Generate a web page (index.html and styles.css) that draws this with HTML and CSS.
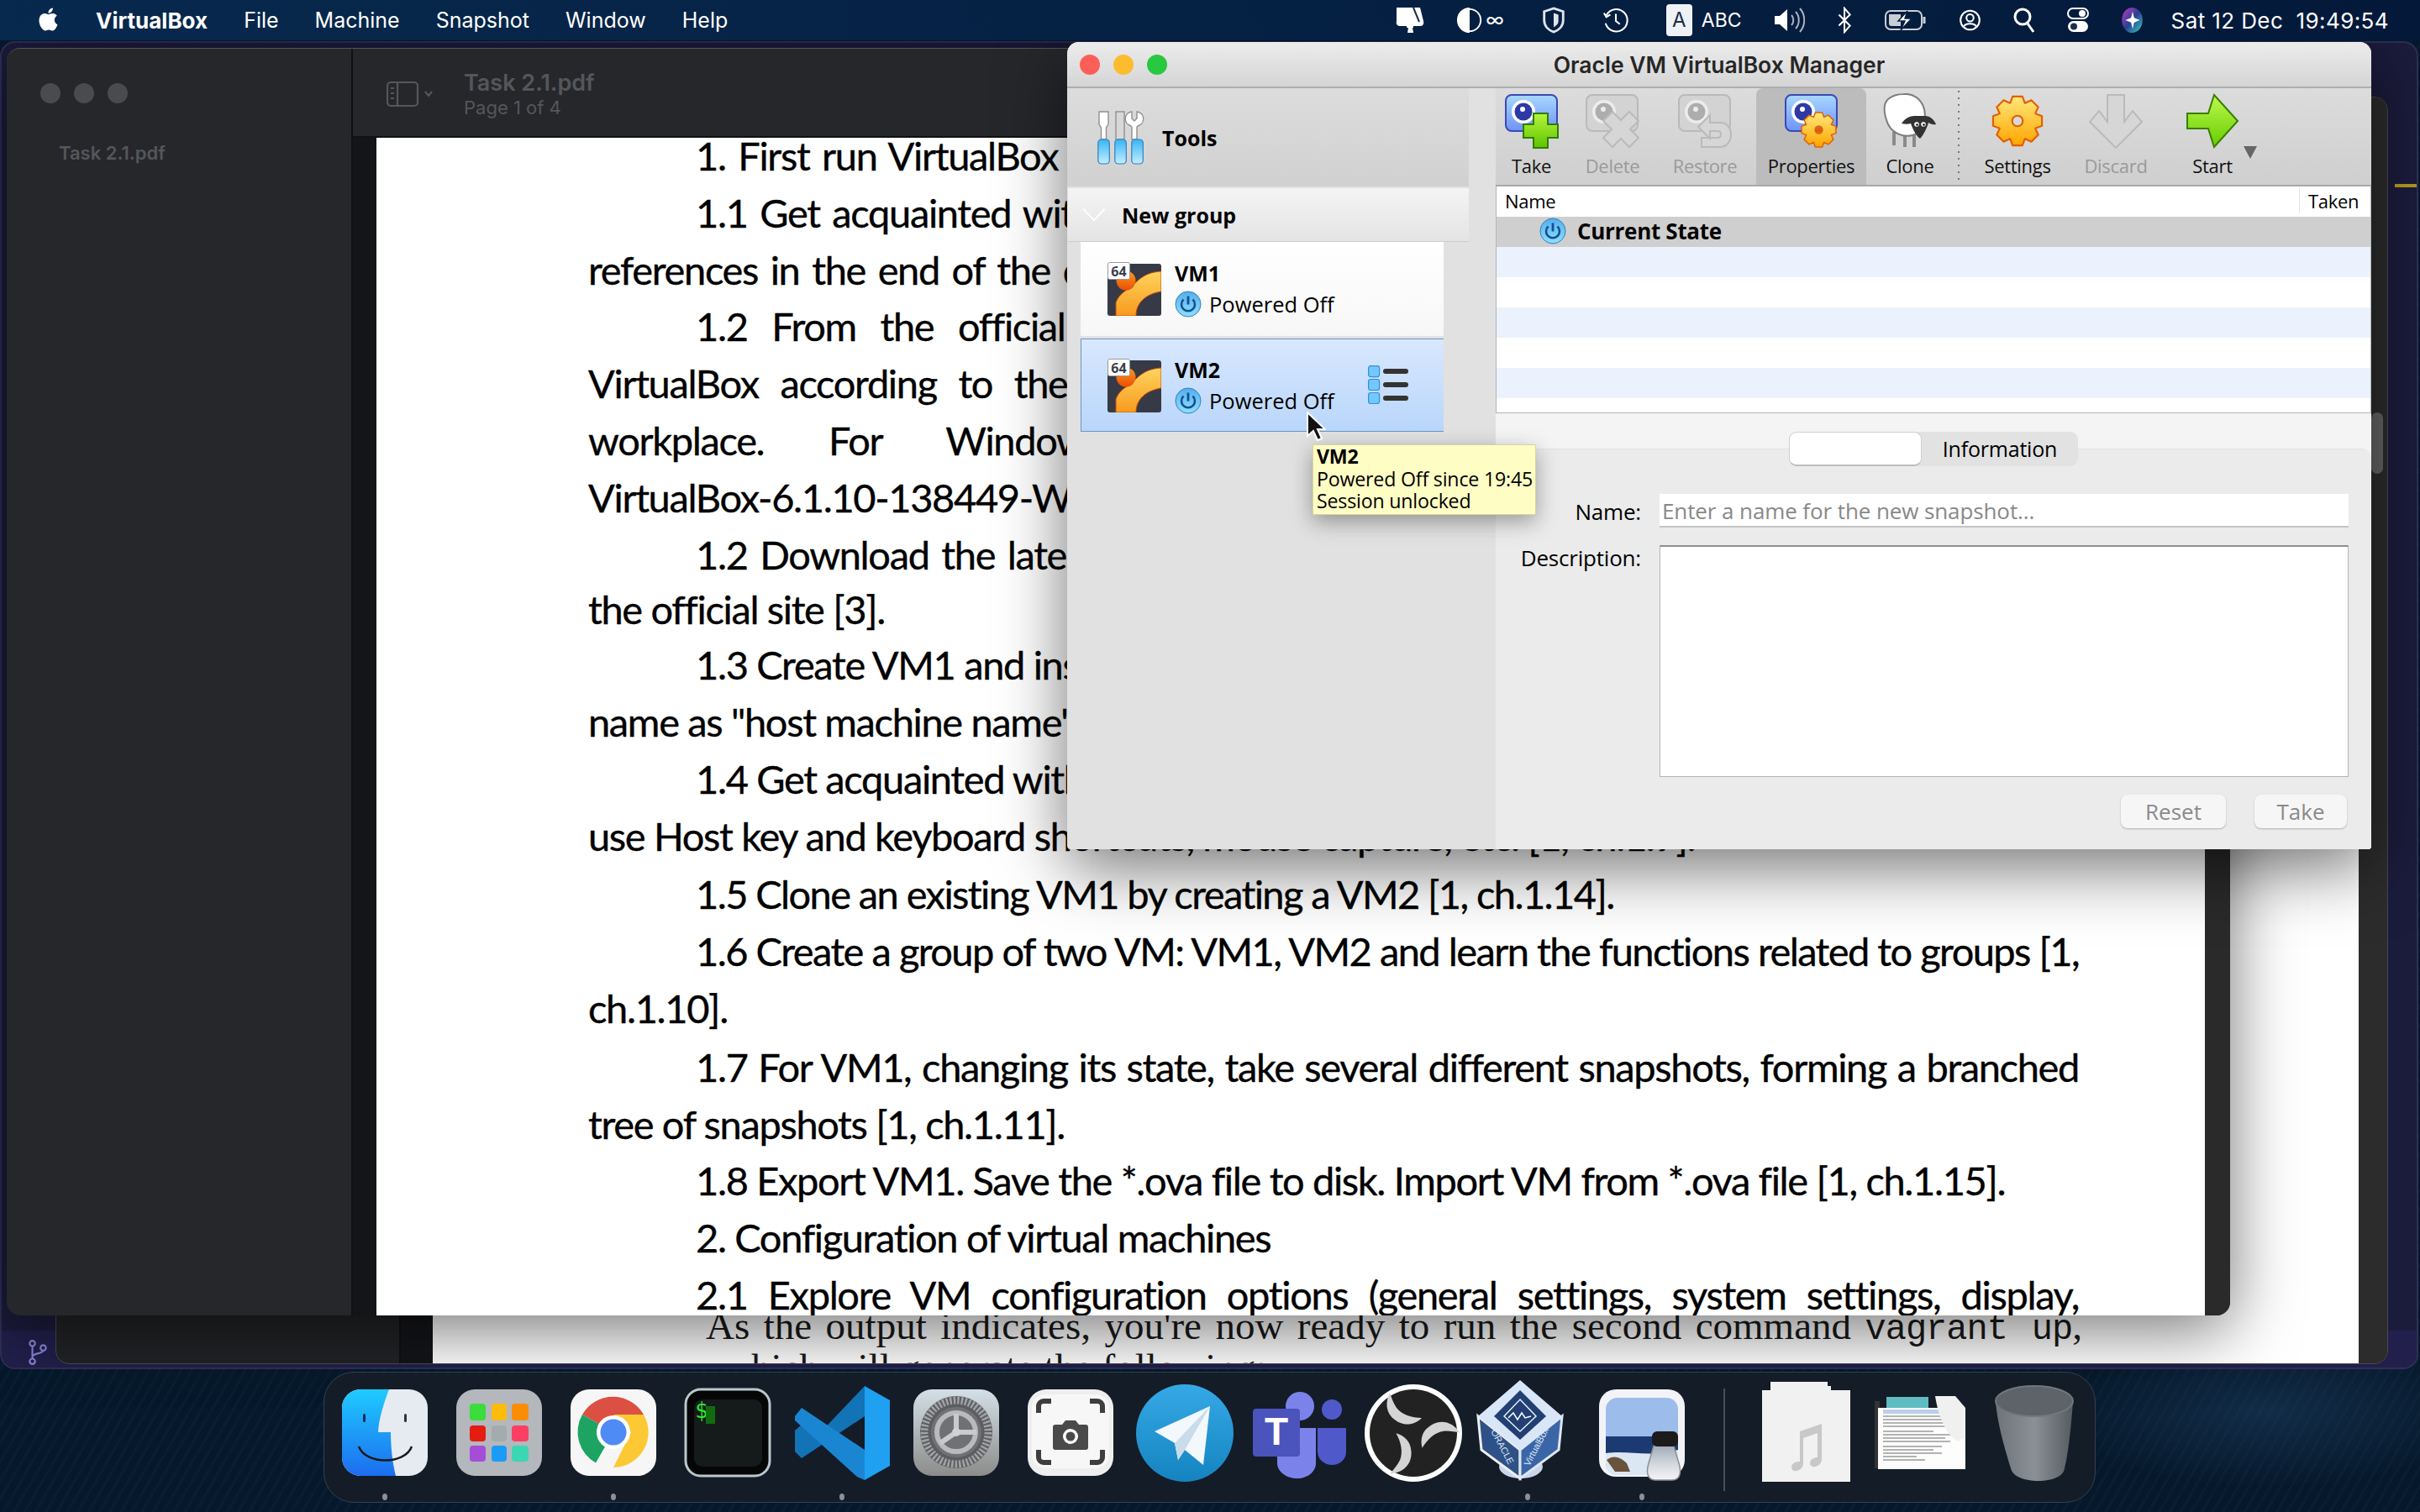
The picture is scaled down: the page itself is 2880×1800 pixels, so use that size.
FILE: index.html
```html
<!DOCTYPE html>
<html lang="en">
<head>
    <meta charset="UTF-8">
    <title>VirtualBox</title>
    <link rel="stylesheet" href="styles.css">
</head>
<body>
<!-- shared gradients and icons -->
<svg class="defs" aria-hidden="true">
    <defs>
        <linearGradient id="gScreen" x1="0" y1="0" x2="0" y2="1"><stop offset="0" stop-color="#a8d8ff"/><stop offset="1" stop-color="#6f92f5"/></linearGradient>
        <linearGradient id="gPlus" x1="0" y1="0" x2="0" y2="1"><stop offset="0" stop-color="#b4f53c"/><stop offset="1" stop-color="#5fc400"/></linearGradient>
        <linearGradient id="gGear" x1="0" y1="0" x2="0" y2="1"><stop offset="0" stop-color="#ffe97a"/><stop offset="1" stop-color="#ffa400"/></linearGradient>
        <linearGradient id="gArrow" x1="0" y1="0" x2="0" y2="1"><stop offset="0" stop-color="#bdf94f"/><stop offset="1" stop-color="#66cc00"/></linearGradient>
        <linearGradient id="gPower" x1="0" y1="0" x2="0" y2="1"><stop offset="0" stop-color="#55aeec"/><stop offset="1" stop-color="#8ee0ff"/></linearGradient>
        <linearGradient id="gHandle" x1="0" y1="0" x2="0" y2="1"><stop offset="0" stop-color="#38b5f5"/><stop offset="1" stop-color="#c4eeff"/></linearGradient>
        <linearGradient id="gCurve" x1="0" y1="0" x2="0" y2="1"><stop offset="0" stop-color="#ffd45e"/><stop offset="1" stop-color="#f79a1d"/></linearGradient>
        <linearGradient id="gBall" x1="0" y1="0" x2="0" y2="1"><stop offset="0" stop-color="#ff9a16"/><stop offset="1" stop-color="#e94e08"/></linearGradient>
        <linearGradient id="gFinder" x1="0" y1="0" x2="0" y2="1"><stop offset="0" stop-color="#1fcbff"/><stop offset="1" stop-color="#1c6df0"/></linearGradient>
        <linearGradient id="gPrefs" x1="0" y1="0" x2="0" y2="1"><stop offset="0" stop-color="#d3e0e6"/><stop offset="1" stop-color="#8c8c8a"/></linearGradient>
        <linearGradient id="gTele" x1="0" y1="0" x2="0" y2="1"><stop offset="0" stop-color="#35a9e6"/><stop offset="1" stop-color="#1484c0"/></linearGradient>
        <linearGradient id="gTrash" x1="0" y1="0" x2="1" y2="0"><stop offset="0" stop-color="#6d7378"/><stop offset=".5" stop-color="#8a9095"/><stop offset="1" stop-color="#565b60"/></linearGradient>
        <linearGradient id="gSiri" x1="0" y1="0" x2="1" y2="1"><stop offset="0" stop-color="#c23bc8"/><stop offset=".5" stop-color="#2a3f90"/><stop offset="1" stop-color="#37d3c4"/></linearGradient>
        <linearGradient id="gGlass" x1="0" y1="0" x2="0" y2="1"><stop offset="0" stop-color="#9aa5b3"/><stop offset=".6" stop-color="#d6dbe0"/><stop offset="1" stop-color="#f5f5f5"/></linearGradient>

        <symbol id="power" viewBox="0 0 32 32">
            <circle cx="16" cy="16" r="15" fill="url(#gPower)" stroke="#2f7fbe" stroke-width="1"/>
            <path d="M10.5 10.5a8 8 0 1 0 11 0" fill="none" stroke="#14508f" stroke-width="2.6"/>
            <path d="M16 6.5v10" stroke="#14508f" stroke-width="2.8"/>
        </symbol>
        <symbol id="vm64" viewBox="0 0 64 64">
            <rect x="0" y="2" width="64" height="62" rx="3" fill="#363a46"/>
            <path d="M64 11C44 12 36 22 28 30 20 35 14 38 10 48L10 64H34C34 48 46 38 64 35Z" fill="url(#gCurve)" stroke="#c9480a" stroke-width="1"/>
            <circle cx="22" cy="22" r="11.5" fill="url(#gBall)"/>
            <rect x="0.5" y="0.5" width="26" height="20" rx="2" fill="#fff" stroke="#9a9a9a"/>
            <text x="13.5" y="16.500" class="badge-text">64</text>
        </symbol>
        <symbol id="snapBlue" viewBox="0 0 64 66">
            <rect x="1" y="2" width="61" height="43" rx="7" fill="url(#gScreen)" stroke="#3949b5" stroke-width="2"/>
            <circle cx="22" cy="22" r="14" fill="#fff"/>
            <circle cx="22" cy="22" r="10.5" fill="#2d3aa5"/>
            <circle cx="21" cy="19" r="3" fill="#fff"/>
        </symbol>
        <symbol id="snapGrey" viewBox="0 0 64 66">
            <rect x="1" y="2" width="61" height="43" rx="7" fill="#d3d3d3" stroke="#bababa" stroke-width="2"/>
            <circle cx="22" cy="22" r="14" fill="#ececec"/>
            <circle cx="22" cy="22" r="10.5" fill="#adadad"/>
            <circle cx="21" cy="19" r="3" fill="#ececec"/>
        </symbol>
        <symbol id="gear" viewBox="-33 -33 66 66">
            <path fill="url(#gGear)" stroke="#e25f00" stroke-width="2.2" fill-rule="evenodd" d="M-9-22L-6-30H6L9-22 9.19-21.92 16.97-25.46 25.46-16.97 21.92-9.19 22-9 30-6V6L22 9 21.92 9.19 25.46 16.97 16.97 25.46 9.19 21.92 9 22 6 30H-6L-9 22-9.19 21.92-16.97 25.46-25.46 16.97-21.92 9.19-22 9-30 6V-6L-22-9-21.92-9.19-25.46-16.97-16.97-25.46-9.19-21.92ZM6.5 0a6.5 6.5 0 1 0-13 0 6.5 6.5 0 1 0 13 0Z"/>
        </symbol>
    </defs>
</svg>

<div class="desktop">
    <!-- window furthest back, only its edges show -->
    <div class="win code-win">
        <div class="code-status"></div>
        <div class="code-mark"></div>
        <svg class="git-icon" viewBox="0 0 22 28" fill="none" stroke="#8d86d8" stroke-width="2">
            <circle cx="5" cy="4" r="3"/><circle cx="5" cy="24" r="3"/><circle cx="17" cy="9" r="3"/>
            <path d="M5 7v14M5 19c0-5 12-3 12-7"/>
        </svg>
    </div>

    <!-- second pdf behind the front one -->
    <div class="win pdf-win pdf-back">
        <div class="pdf-side"></div>
        <div class="pdf-gutter"></div>
        <div class="back-page">
            <p class="back-line">As the output indicates, you're now ready to run the second command <code class="mono">vagrant up</code>,</p>
            <p class="back-line plain">which will generate the following:</p>
        </div>
        <div class="pdf-rail"><div class="rail-thumb"></div></div>
    </div>

    <!-- front pdf -->
    <div class="win pdf-win pdf-front">
        <div class="pdf-side front-side">
            <div class="lights">
                <span class="light"></span><span class="light"></span><span class="light"></span>
            </div>
            <div class="side-file">Task 2.1.pdf</div>
        </div>
        <div class="pdf-main">
            <div class="pdf-toolbar">
                <svg class="side-toggle" viewBox="0 0 58 32" fill="none" stroke="#55565a" stroke-width="2.2">
                    <rect x="1" y="2" width="36" height="28" rx="4"/><path d="M13 2v28M5 9h4M5 15h4M5 21h4"/><path d="M46 13l4 5 4-5"/>
                </svg>
                <div>
                    <div class="pdf-title">Task 2.1.pdf</div>
                    <div class="pdf-sub">Page 1 of 4</div>
                </div>
            </div>
            <div class="pdf-content">
                <div class="pdf-gutter front-gutter"></div>
                <div class="page">
                    <div class="doc">
                        <p class="ln in ws0">1. First run VirtualBox and get acquainted</p>
                        <p class="ln in ws0">1.1 Get acquainted with the application</p>
                        <p class="ln ws0">references in the end of the document</p>
                        <p class="ln in ws1">1.2 From the official site of Oracle</p>
                        <p class="ln ws2">VirtualBox according to the host system</p>
                        <p class="ln ws3">workplace. For Windows hosts</p>
                        <p class="ln">VirtualBox-6.1.10-138449-Win.exe</p>
                        <p class="ln in ws0">1.2 Download the latest guest system</p>
                        <p class="ln up2">the official site [3].</p>
                        <p class="ln in up2">1.3 Create VM1 and install the system</p>
                        <p class="ln">name as "host machine name"</p>
                        <p class="ln in">1.4 Get acquainted with the main menu</p>
                        <p class="ln">use Host key and keyboard shortcuts, mouse capture, etc. [1, ch.1.9].</p>
                        <p class="ln in tight down2">1.5 Clone an existing VM1 by creating a VM2 [1, ch.1.14].</p>
                        <p class="ln in just tight">1.6 Create a group of two VM: VM1, VM2 and learn the functions related to groups [1,</p>
                        <p class="ln">ch.1.10].</p>
                        <p class="ln in just down2">1.7 For VM1, changing its state, take several different snapshots, forming a branched</p>
                        <p class="ln">tree of snapshots [1, ch.1.11].</p>
                        <p class="ln in">1.8 Export VM1. Save the *.ova file to disk. Import VM from *.ova file [1, ch.1.15].</p>
                        <p class="ln in">2. Configuration of virtual machines</p>
                        <p class="ln in just">2.1 Explore VM configuration options (general settings, system settings, display,</p>
                    </div>
                </div>
                <div class="pdf-rail front-rail"></div>
            </div>
        </div>
    </div>

    <!-- VirtualBox manager -->
    <div class="win vbox">
        <div class="vbox-title">
            <div class="lights vbox-lights">
                <span class="light red"></span><span class="light yellow"></span><span class="light green"></span>
            </div>
            <div class="vbox-name">Oracle VM VirtualBox Manager</div>
        </div>
        <div class="vbox-body">
            <div class="vm-col">
                <div class="tools-row">
                    <svg class="tools-icon" viewBox="0 0 58 64">
                        <g fill="#fff" stroke="#8f8f8f" stroke-width="1.4">
                            <path d="M2 1h11v15l-2.5 4v14h-6V20L2 16Z"/>
                            <rect x="22" y="1" width="10" height="33" fill="#d8d8d8"/>
                            <path d="M41 1v8l3 3 3-3V1a8.5 8.5 0 0 1 2 16.5l-2 1.500V34h-6V19l-2-1.500A8.5 8.500 0 0 1 41 1Z"/>
                        </g>
                        <g fill="url(#gHandle)" stroke="#2f7fbe" stroke-width="1.2" >
                            <rect x="0.800" y="34" width="13.500" height="29" rx="4"/>
                            <rect x="20.800" y="34" width="13.500" height="29" rx="4"/>
                            <rect x="40.800" y="34" width="13.500" height="29" rx="4"/>
                        </g>
                    </svg>
                    <span class="tools-text">Tools</span>
                </div>
                <div class="group-row">
                    <svg class="chev" viewBox="0 0 30 20" fill="none" stroke="#fff" stroke-width="2"><path d="M1 2l14 15L29 2"/></svg>
                    <span class="group-name">New group</span>
                </div>
                <div class="vm-item">
                    <svg class="vm-icon"><use href="#vm64"/></svg>
                    <div class="vm-text">
                        <div class="vm-name">VM1</div>
                        <div class="vm-state"><svg class="power"><use href="#power"/></svg><span>Powered Off</span></div>
                    </div>
                </div>
                <div class="vm-item selected">
                    <svg class="vm-icon"><use href="#vm64"/></svg>
                    <div class="vm-text">
                        <div class="vm-name">VM2</div>
                        <div class="vm-state"><svg class="power"><use href="#power"/></svg><span>Powered Off</span></div>
                    </div>
                    <svg class="details-icon" viewBox="0 0 48 46">
                        <g fill="#70c8ff" stroke="#3a8ed0" stroke-width="1.2">
                            <rect x="0.600" y="0.600" width="13" height="13" rx="2.500"/>
                            <rect x="0.600" y="16.500" width="13" height="13" rx="2.500"/>
                            <rect x="0.600" y="32.500" width="13" height="13" rx="2.500"/>
                        </g>
                        <g fill="#333">
                            <rect x="18" y="4" width="30" height="6" rx="3"/>
                            <rect x="18" y="20" width="30" height="6" rx="3"/>
                            <rect x="18" y="36" width="30" height="6" rx="3"/>
                        </g>
                    </svg>
                </div>
            </div>
            <div class="snap-col">
                <div class="toolbar">
                    <div class="tool t-take">
                        <svg class="tool-icon" viewBox="0 0 64 66"><use href="#snapBlue" width="64" height="66"/><path d="M34 24h17v13h12v16H51v12H34V53H22V37h12Z" fill="url(#gPlus)" stroke="#2f7d00" stroke-width="2"/></svg>
                        <span>Take</span>
                    </div>
                    <div class="tool t-delete off">
                        <svg class="tool-icon" viewBox="0 0 64 66"><use href="#snapGrey" width="64" height="66"/><path d="M42 32l10-10 11 11-10 10 10 10-11 11-10-10-10 10-11-11 10-10-10-10 11-11Z" fill="#d6d6d6" stroke="#bababa" stroke-width="2"/></svg>
                        <span>Delete</span>
                    </div>
                    <div class="tool t-restore off">
                        <svg class="tool-icon" viewBox="0 0 64 66"><use href="#snapGrey" width="64" height="66"/><path d="M24 40l14-14v9h12c8 0 13 6 13 14s-5 15-13 15H28V53h19c3 0 4-2 4-4s-1-4-4-4h-9v9Z" fill="#d6d6d6" stroke="#bababa" stroke-width="2"/></svg>
                        <span>Restore</span>
                    </div>
                    <div class="tool t-props active">
                        <svg class="tool-icon" viewBox="0 0 64 66"><use href="#snapBlue" width="64" height="66"/><use href="#gear" x="18" y="21" width="45" height="45"/><circle cx="40.500" cy="43.500" r="3.500" fill="#e25f00"/></svg>
                        <span>Properties</span>
                    </div>
                    <div class="tool t-clone">
                        <svg class="tool-icon" viewBox="0 0 64 66">
                            <g fill="#8a8a8a"><rect x="11" y="46" width="4" height="16"/><rect x="24" y="48" width="4" height="16"/><rect x="35" y="48" width="4" height="16"/></g>
                            <path d="M24 1c12-1 22 6 25 18 3 14-3 28-14 31-12 3-24-3-29-13C1 25-1 14 6 7c5-4 11-6 18-6Z" fill="#fff" stroke="#7c7c7c" stroke-width="2"/>
                            <path d="M22 36C26 30 32 27 37 27L50 27C55 27 60 30 63 37 59 38 56 36 54 35 52 42 48 50 44 54 39 50 36 44 33 36 30 37 26 37 22 36Z" fill="#333"/>
                            <circle cx="40" cy="37" r="2.800" fill="#fff"/><circle cx="48" cy="37" r="2.800" fill="#fff"/>
                            <circle cx="40.500" cy="37.500" r="1.300" fill="#111"/><circle cx="48.500" cy="37.500" r="1.300" fill="#111"/>
                        </svg>
                        <span>Clone</span>
                    </div>
                    <div class="tool-sep"></div>
                    <div class="tool t-settings">
                        <svg class="tool-icon" viewBox="0 0 64 66"><use href="#gear" x="0" y="1" width="64" height="64"/></svg>
                        <span>Settings</span>
                    </div>
                    <div class="tool t-discard off">
                        <svg class="tool-icon" viewBox="0 0 64 66"><path d="M22 2h20v32l10-13 11 13-31 31L1 34l11-13 10 13Z" fill="#d6d6d6" stroke="#bababa" stroke-width="2"/></svg>
                        <span>Discard</span>
                    </div>
                    <div class="tool t-start">
                        <svg class="tool-icon" viewBox="0 0 64 66"><path d="M34 2l-7 22H2v18h25l7 22 28-31Z" fill="url(#gArrow)" stroke="#3a7d00" stroke-width="2"/></svg>
                        <span>Start</span>
                        <i class="start-drop"></i>
                    </div>
                </div>
                <div class="snap-table">
                    <div class="snap-head"><span class="col-name">Name</span><span class="col-taken">Taken</span></div>
                    <div class="snap-row current"><svg class="power small"><use href="#power"/></svg><span>Current State</span></div>
                    <div class="snap-row alt"></div>
                    <div class="snap-row"></div>
                    <div class="snap-row alt"></div>
                    <div class="snap-row"></div>
                    <div class="snap-row alt"></div>
                    <div class="snap-row last"></div>
                </div>
                <div class="props">
                    <div class="seg">
                        <div class="seg-on"></div>
                        <div class="seg-off">Information</div>
                    </div>
                    <div class="props-panel">
                        <label class="f-label">Name:</label>
                        <div class="f-input">Enter a name for the new snapshot...</div>
                        <label class="f-label f-top">Description:</label>
                        <div class="f-area"></div>
                        <div class="f-buttons">
                            <button class="mac-btn b-reset" type="button">Reset</button>
                            <button class="mac-btn b-take" type="button">Take</button>
                        </div>
                    </div>
                </div>
            </div>
        </div>
    </div>

    <!-- tooltip and pointer over the manager -->
    <div class="tip">
        <div class="tip-name">VM2</div>
        <div>Powered Off since 19:45</div>
        <div>Session unlocked</div>
    </div>
    <svg class="pointer" viewBox="0 0 24 36">
        <path d="M2 1v28l7-6 5 11 5-2-5-11h9Z" fill="#111" stroke="#fff" stroke-width="2"/>
    </svg>

    <!-- menu bar -->
    <div class="menubar">
        <svg class="apple" viewBox="0 0 24 24" fill="#fff"><path d="M12.152 6.896c-.948 0-2.415-1.078-3.96-1.04-2.04.027-3.91 1.183-4.961 3.014-2.117 3.675-.546 9.103 1.519 12.09 1.013 1.454 2.208 3.09 3.792 3.039 1.52-.065 2.09-.987 3.935-.987 1.831 0 2.35.987 3.96.948 1.637-.026 2.676-1.48 3.676-2.948 1.156-1.688 1.636-3.325 1.662-3.415-.039-.013-3.182-1.221-3.22-4.857-.026-3.04 2.48-4.494 2.597-4.559-1.429-2.09-3.623-2.324-4.39-2.376-2-.156-3.675 1.09-4.61 1.09zM15.53 3.83c.843-1.012 1.4-2.427 1.245-3.83-1.207.052-2.662.805-3.532 1.818-.78.896-1.454 2.338-1.273 3.714 1.338.104 2.715-.688 3.559-1.701"/></svg>
        <span class="menu-item app">VirtualBox</span>
        <span class="menu-item">File</span>
        <span class="menu-item">Machine</span>
        <span class="menu-item">Snapshot</span>
        <span class="menu-item">Window</span>
        <span class="menu-item">Help</span>
        <div class="status">
            <svg class="st w35" viewBox="0 0 35 32" fill="#fff"><path d="M2 1l28 0 4 16c1 4-1 6-4 6H22v2h-8v-2H7c-4 0-6-2-5-6Z"/><path d="M16 25h5l1 6h-7Z"/><path d="M22 1l7 17" stroke="#1b2d46" stroke-width="2" fill="none"/></svg>
            <svg class="st w32" viewBox="0 0 32 34"><circle cx="16" cy="17" r="14" fill="none" stroke="#fff" stroke-width="2"/><path d="M16 1a16 16 0 0 0 0 32Z" fill="#fff"/></svg>
            <span class="st-text inf">∞</span>
            <svg class="st w30 shield" viewBox="0 0 30 34" fill="none" stroke="#dfe5ec" stroke-width="3"><path d="M15 2l12 4v11c0 8-6 13-12 15C9 30 3 25 3 17V6Z"/><path d="M15 8l6 2v8c0 4-3 6-6 8Z" fill="#dfe5ec" stroke="none"/></svg>
            <svg class="st w32 timem" viewBox="0 0 32 34" fill="none" stroke="#fff" stroke-width="2.200"><path d="M4 11A14 14 0 1 1 3 21"/><path d="M1 8l3 5 5-3"/><path d="M16 9v9l5 4"/></svg>
            <div class="abc"><span class="abc-box">A</span><span class="st-text">ABC</span></div>
            <svg class="st w37" viewBox="0 0 37 30" fill="#fff"><path d="M1 10h6l9-8v26l-9-8H1Z"/><path d="M21 9c3 3 3 9 0 12M26 5c5 5 5 15 0 20M31 1c7 8 7 20 0 28" fill="none" stroke="#aab2bf" stroke-width="2"/></svg>
            <svg class="st w19" viewBox="0 0 19 34" fill="none" stroke="#fff" stroke-width="2.200"><path d="M2 10l14 14-7 8V2l7 8L2 24"/></svg>
            <svg class="st w50" viewBox="0 0 50 26" fill="none" stroke="#c9ced6" stroke-width="2"><rect x="1" y="2" width="43" height="22" rx="6"/><path d="M47 9v8" stroke-width="3"/><path d="M5 6h14v14H8a3 3 0 0 1-3-3Z" fill="#c9ced6" stroke="none"/><path d="M27 2L16 14h8l-5 11 13-14h-8Z" fill="#fff" stroke="#07233f" stroke-width="1.500"/></svg>
            <svg class="st w27" viewBox="0 0 27 34" fill="none" stroke="#fff" stroke-width="2.200"><circle cx="13.500" cy="17" r="12"/><circle cx="13.500" cy="14" r="4.500"/><path d="M5 26c2-6 15-6 17 0"/></svg>
            <svg class="st w26" viewBox="0 0 26 32" fill="none" stroke="#fff" stroke-width="3"><circle cx="11" cy="12" r="9"/><path d="M17 20l7 10"/></svg>
            <svg class="st w26" viewBox="0 0 26 32"><rect x="1" y="2" width="24" height="12" rx="6" fill="none" stroke="#fff" stroke-width="2"/><circle cx="18" cy="8" r="4" fill="#fff"/><rect x="1" y="17" width="24" height="13" rx="6.500" fill="#fff"/><circle cx="8" cy="23.500" r="4" fill="#1a2f4c"/></svg>
            <svg class="st w27" viewBox="0 0 27 34"><ellipse cx="13.500" cy="17" rx="13" ry="16" fill="url(#gSiri)"/><path d="M14 6l2 8 7 3-7 3-2 8-2-8-7-3 7-3Z" fill="#fff"/></svg>
            <span class="clock">Sat 12 Dec&nbsp; 19:49:54</span>
        </div>
    </div>

    <!-- dock -->
    <div class="dock">
        <div class="dock-item running">
            <svg viewBox="0 0 136 136">
                <rect x="17" y="16" width="102" height="103" rx="22" fill="#e6ebf2"/>
                <path d="M39 16h34c-6 16-12 34-13 51h15c0 18 2 36 6 52H39a22 22 0 0 1-22-22V38a22 22 0 0 1 22-22Z" fill="url(#gFinder)"/>
                <path d="M37 84c8 22 55 22 63 0" fill="none" stroke="#1a1a1a" stroke-width="2.500"/>
                <rect x="42" y="45" width="3" height="10" rx="1.500" fill="#0c2c58"/><rect x="91" y="45" width="3" height="10" rx="1.500" fill="#333"/>
            </svg>
        </div>
        <div class="dock-item">
            <svg viewBox="0 0 136 136">
                <rect x="17" y="16" width="102" height="103" rx="22" fill="#b4b7bb"/>
                <rect x="33" y="33" width="19" height="20" rx="4" fill="#3bdc3b"/><rect x="59" y="33" width="18" height="20" rx="4" fill="#fdbb0b"/><rect x="83" y="33" width="20" height="20" rx="4" fill="#fa8d06"/>
                <rect x="33" y="59" width="19" height="19" rx="4" fill="#e51c12"/><rect x="59" y="59" width="18" height="19" rx="4" fill="#a3abad"/><rect x="83" y="59" width="20" height="19" rx="4" fill="#fb3f63"/>
                <rect x="33" y="83" width="19" height="19" rx="4" fill="#a44dd6"/><rect x="59" y="83" width="18" height="19" rx="4" fill="#1b9bf8"/><rect x="83" y="83" width="20" height="19" rx="4" fill="#3bd6b4"/>
            </svg>
        </div>
        <div class="dock-item running">
            <svg viewBox="0 0 136 136">
                <rect x="17" y="16" width="102" height="103" rx="22" fill="#f6f6f6"/>
                <path d="M68 67L31 46a42 42 0 0 1 73 0Z" fill="#db5043"/>
                <path d="M68 67l-21 36.500A42 42 0 0 1 31 46Z" fill="#1da462"/>
                <path d="M68 46h36a42 42 0 0 1-36 63l21-42Z" fill="#fcc934"/>
                <circle cx="68" cy="67" r="20" fill="#fff"/><circle cx="68" cy="67" r="15.500" fill="#4e8bf5"/>
            </svg>
        </div>
        <div class="dock-item">
            <svg viewBox="0 0 136 136">
                <rect x="18" y="16" width="100" height="103" rx="18" fill="#060606" stroke="#b9c8cc" stroke-width="3"/>
                <rect x="28" y="28" width="81" height="80" rx="10" fill="#151b1b"/>
                <text x="29" y="50" class="term-text">$</text>
                <rect x="42" y="36" width="11" height="21" fill="#0f6d10"/>
            </svg>
        </div>
        <div class="dock-item running">
            <svg viewBox="0 0 136 136">
                <path d="M95 12L38 72 20 58 12 65 12 90 20 98 95 48Z" fill="#1273b6"/>
                <path d="M20 38L12 48V53L86 120 95 124V88Z" fill="#1a86d2"/>
                <path d="M95 12L125 29V107L95 124Z" fill="#1fa0f1"/>
            </svg>
        </div>
        <div class="dock-item">
            <svg viewBox="0 0 136 136">
                <rect x="17" y="16" width="102" height="103" rx="22" fill="url(#gPrefs)"/>
                <circle cx="68" cy="67" r="43" fill="#5b5d60"/>
                <circle cx="68" cy="67" r="38" fill="none" stroke="#a0a2a5" stroke-width="9" stroke-dasharray="2.500 2"/>
                <circle cx="68" cy="67" r="30" fill="#6f7174"/>
                <circle cx="68" cy="67" r="23" fill="none" stroke="#b8babc" stroke-width="6"/>
                <path d="M68 67V45M68 67L49 80M68 67l24 0" stroke="#c8cacc" stroke-width="6" fill="none"/>
                <circle cx="68" cy="67" r="5" fill="#d0d2d4"/>
            </svg>
        </div>
        <div class="dock-item">
            <svg viewBox="0 0 136 136">
                <rect x="17" y="16" width="102" height="103" rx="22" fill="#eeeeee"/>
                <rect x="22" y="22" width="92" height="88" rx="16" fill="#f7f7f7"/>
                <path d="M30 44V36a6 6 0 0 1 6-6h9M91 30h9a6 6 0 0 1 6 6v8M106 88v9a6 6 0 0 1-6 6h-9M45 103h-9a6 6 0 0 1-6-6v-9" fill="none" stroke="#3e3e3e" stroke-width="6"/>
                <path d="M50 58h8l4-5h12l4 5h8a3 3 0 0 1 3 3v24a3 3 0 0 1-3 3H50a3 3 0 0 1-3-3V61a3 3 0 0 1 3-3Z" fill="#4a4a4a"/>
                <circle cx="68" cy="72" r="9" fill="#fff"/><circle cx="68" cy="72" r="5.500" fill="#4a4a4a"/>
            </svg>
        </div>
        <div class="dock-item">
            <svg viewBox="0 0 136 136">
                <ellipse cx="68" cy="68" rx="58" ry="58" fill="url(#gTele)"/>
                <path d="M32 66L98 36 90 106 68 88 60 100 56 80Z" fill="#f2f8fc"/>
                <path d="M56 80L98 36 68 88 60 100Z" fill="#c9dcea"/>
            </svg>
        </div>
        <div class="dock-item">
            <svg viewBox="0 0 136 136">
                <circle cx="107" cy="40" r="12" fill="#5059c9"/>
                <path d="M90 62h34v28c0 10-8 16-17 16-8 0-17-6-17-16Z" fill="#5059c9"/>
                <circle cx="69" cy="36" r="17" fill="#7b83eb"/>
                <path d="M42 62h46v42c0 10-10 18-22 18-13 0-24-8-24-18Z" fill="#7b83eb"/>
                <rect x="13" y="39" width="56" height="57" rx="4" fill="#4b53bc"/>
                <text x="41" y="82" class="teams-text">T</text>
            </svg>
        </div>
        <div class="dock-item">
            <svg viewBox="0 0 136 136">
                <circle cx="68" cy="68" r="58" fill="#fff"/>
                <circle cx="68" cy="68" r="52" fill="#232223"/>
                <g fill="#d4d4d4">
                    <path d="M40 20C32 36 38 52 56 57 64 59 72 56 78 50 66 50 54 46 48 38 44 32 42 26 40 20Z"/>
                    <path d="M40 20C32 36 38 52 56 57 64 59 72 56 78 50 66 50 54 46 48 38 44 32 42 26 40 20Z" transform="rotate(120 68 68)"/>
                    <path d="M40 20C32 36 38 52 56 57 64 59 72 56 78 50 66 50 54 46 48 38 44 32 42 26 40 20Z" transform="rotate(240 68 68)"/>
                </g>
            </svg>
        </div>
        <div class="dock-item running">
            <svg viewBox="0 0 136 136">
                <ellipse cx="60" cy="108" rx="26" ry="14" fill="#c9d5ec"/>
                <path d="M9 48L59 88V122L13 88Z" fill="#2e5288" stroke="#eee" stroke-width="3"/>
                <path d="M109 48L59 88V122L105 88Z" fill="#3a66a8" stroke="#dde6f2" stroke-width="3"/>
                <path d="M59 5L109 48 59 88 9 48Z" fill="#d9e6f7"/>
                <path d="M59 17L90 48 59 76 28 48Z" fill="#213f73"/>
                <path d="M59 28L78 48 59 66 40 48Z" fill="none" stroke="#e8eef7" stroke-width="1.500"/>
                <path d="M45 50l6-6 5 8 5-8 4 6 7-2" fill="none" stroke="#fff" stroke-width="1.500"/>
                <text class="cube-text" transform="translate(24 66) rotate(62)">ORACLE</text>
                <text class="cube-text" transform="translate(70 108) rotate(-62)">VirtualBox</text>
            </svg>
        </div>
        <div class="dock-item running">
            <svg viewBox="0 0 136 136">
                <rect x="17" y="16" width="102" height="104" rx="20" fill="#f2f3f6"/>
                <rect x="25" y="26" width="86" height="92" rx="14" fill="#9cbcec"/>
                <path d="M25 72h86v30a14 14 0 0 1-14 14H39a14 14 0 0 1-14-14Z" fill="#1c3a72"/>
                <path d="M25 92c30-4 50 6 86-4v16a14 14 0 0 1-14 14H39a14 14 0 0 1-14-14Z" fill="#dbe8f3"/>
                <path d="M26 100c8-6 16-4 24 4l4 10H36Z" fill="#6a533c"/>
                <path d="M76 104l7-24h22l7 24c3 10 2 20-8 20H84c-10 0-11-10-8-20Z" fill="url(#gGlass)" stroke="#8c9094" stroke-width="1.500"/>
                <rect x="80" y="66" width="31" height="18" rx="6" fill="#1b1b1b"/>
            </svg>
        </div>
        <div class="dock-sep"></div>
        <div class="dock-item">
            <svg viewBox="0 0 136 136">
                <path d="M26 7H94V12H98V17H121V126H16V17H26Z" fill="#f1f1f1"/>
                <path d="M61 66l26-9v42c0 10-14 12-14 5 0-5 5-7 9-7V68l-17 6v30c0 10-14 12-14 5 0-6 6-7 10-7Z" fill="#c8c8c8"/>
            </svg>
        </div>
        <div class="dock-item">
            <svg viewBox="0 0 136 136">
                <rect x="14" y="30" width="6" height="80" fill="#333"/>
                <rect x="28" y="25" width="50" height="14" fill="#5ebcc2"/>
                <rect x="18" y="38" width="104" height="73" fill="#fdfdfd"/>
                <rect x="24" y="40" width="90" height="5" fill="#bcd0ea"/>
                <g stroke="#9a9a9a" stroke-width="1.500">
                    <path d="M24 48h86M24 52h80M24 56h86M24 60h84M24 66h60M24 70h86M24 74h74M24 78h80M24 84h70M24 88h60M24 92h70M24 96h40M24 100h50"/>
                </g>
                <path d="M86 24h24l12 14v34l-8 6c-14-6-24-28-28-54Z" fill="#f0f0f0"/>
            </svg>
        </div>
        <div class="dock-item">
            <svg viewBox="0 0 136 136">
                <path d="M22 30c4 8 88 8 92 0-2 30-6 66-10 80-2 20-60 20-64 0-4-14-16-50-18-80Z" fill="url(#gTrash)"/>
                <ellipse cx="68" cy="30" rx="46" ry="18" fill="#5d6368" stroke="#71777c" stroke-width="2"/>
            </svg>
        </div>
    </div>
</div>
</body>
</html>
```
FILE: styles.css
```css
* {
    box-sizing: border-box;
}

html, body {
    margin: 0;
    padding: 0;
    width: 2880px;
    height: 1800px;
    overflow: hidden;
}

body {
    font-family: "Open Sans", sans-serif;
    color: #000;
}

.defs {
    position: absolute;
    width: 0;
    height: 0;
}

p {
    margin: 0;
}

.desktop {
    position: relative;
    width: 2880px;
    height: 1800px;
    overflow: hidden;
    background:
        radial-gradient(ellipse 260px 90px at 2700px 1680px, rgba(40, 80, 120, 0.35), transparent),
        repeating-linear-gradient(120deg, rgba(70, 110, 150, 0.05) 0 3px, transparent 3px 11px),
        #06192c;
}

/* windows are free on the desktop */
.win {
    position: absolute;
}

.code-win {
    left: 0;
    top: 49px;
    width: 2878px;
    height: 1581px;
    background: #1b1b3c;
    border: 2px solid #2f2f55;
    border-radius: 18px;
}

.code-status {
    position: absolute;
    left: 0;
    right: 0;
    bottom: 0;
    height: 44px;
    background: #221f4c;
    border-radius: 0 0 16px 16px;
}

.code-mark {
    position: absolute;
    right: 0;
    top: 168px;
    width: 26px;
    height: 4px;
    background: #b39a1c;
}

.git-icon {
    position: absolute;
    left: 31px;
    top: 1544px;
    width: 24px;
    height: 30px;
}

.pdf-win {
    display: flex;
    background: #26272b;
    border-radius: 16px;
    overflow: hidden;
}

.pdf-back {
    left: 66px;
    top: 115px;
    width: 2776px;
    height: 1509px;
    background: #222326;
    border: 1px solid #4a4a4d;
}

.pdf-front {
    left: 8px;
    top: 57px;
    width: 2646px;
    height: 1509px;
    border-top: 1px solid #555;
    box-shadow: 0 16px 80px rgba(0, 0, 0, 0.55);
}

.pdf-side {
    width: 410px;
    flex: none;
    border-right: 2px solid #111;
}

.front-side {
    width: 412px;
    padding: 41px 0 0 40px;
}

.pdf-gutter {
    width: 38px;
    flex: none;
    background: #141519;
}

.back-page {
    width: 2292px;
    flex: none;
    background: #fff;
    display: flex;
    flex-direction: column;
    justify-content: flex-end;
    padding: 0 329px 0 325px;
    font-family: "Liberation Serif", serif;
    font-size: 47px;
    color: #1a1a1a;
}

.back-line {
    height: 50px;
    line-height: 50px;
    white-space: nowrap;
    text-align: justify;
    text-align-last: justify;
}

.back-line.plain {
    text-align-last: left;
    padding-left: 20px;
    margin-bottom: -30px;
}

.mono {
    font-family: "Liberation Mono", monospace;
    font-size: 42px;
    letter-spacing: -1px;
}

.pdf-rail {
    flex: 1;
    background: #2c2c2c;
    position: relative;
}

.rail-thumb {
    position: absolute;
    right: 5px;
    top: 375px;
    width: 14px;
    height: 73px;
    border-radius: 7px;
    background: #666;
}

.lights {
    display: flex;
    gap: 16px;
}

.light {
    width: 24px;
    height: 24px;
    border-radius: 50%;
    background: #4a4b4f;
}

.light.red {
    background: #fc5f57;
}

.light.yellow {
    background: #fdbc2e;
}

.light.green {
    background: #28c840;
}

.side-file {
    margin: 46px 0 0 22px;
    font-family: Inter, sans-serif;
    font-weight: 600;
    font-size: 22px;
    color: #55565a;
}

.pdf-main {
    flex: 1;
    display: flex;
    flex-direction: column;
    min-width: 0;
}

.pdf-toolbar {
    height: 106px;
    flex: none;
    display: flex;
    align-items: center;
    gap: 34px;
    padding: 3px 0 0 40px;
    border-bottom: 2px solid #111;
    font-family: Inter, sans-serif;
    color: #55565a;
}

.side-toggle {
    width: 58px;
    height: 32px;
}

.pdf-title {
    font-size: 27px;
    font-weight: 600;
    line-height: 32px;
}

.pdf-sub {
    font-size: 22px;
    line-height: 26px;
}

.pdf-content {
    flex: 1;
    display: flex;
    min-height: 0;
}

.front-gutter {
    width: 28px;
}

.page {
    width: 2176px;
    flex: none;
    background: #fff;
    overflow: hidden;
}

.front-rail {
    background: #2a2a2a;
}

.doc {
    margin-top: -12px;
    padding-left: 252px;
    width: 2026px;
    font-family: Lato, sans-serif;
    font-size: 47px;
    letter-spacing: -1.36px;
    -webkit-text-stroke: 0.35px #000;
    color: #000;
}

.ln {
    height: 67.8px;
    line-height: 67.8px;
    white-space: nowrap;
}

.ln.in {
    padding-left: 128px;
}

.ln.just {
    text-align: justify;
    text-align-last: justify;
}

.ln.tight {
    letter-spacing: -1.6px;
}

.up2 {
    margin-top: -2px;
}

.down2 {
    margin-top: 2px;
}

.ws0 {
    word-spacing: 4px;
}

.ws1 {
    word-spacing: 18px;
}

.ws2 {
    word-spacing: 15px;
}

.ws3 {
    word-spacing: 66px;
}

/* VirtualBox manager */
.vbox {
    left: 1270px;
    top: 50px;
    width: 1552px;
    height: 961px;
    background: #e1e1e1;
    border-radius: 14px 14px 4px 4px;
    overflow: hidden;
    box-shadow: 0 22px 80px rgba(0, 0, 0, 0.55);
    display: flex;
    flex-direction: column;
}

.vbox-title {
    height: 55px;
    flex: none;
    position: relative;
    display: flex;
    align-items: center;
    justify-content: center;
    background: linear-gradient(#ececec, #d5d5d5);
    border-bottom: 2px solid #aeaeae;
}

.vbox-lights {
    position: absolute;
    left: 15px;
    top: 15px;
}

.vbox-name {
    font-family: Inter, sans-serif;
    font-size: 26.5px;
    font-weight: 600;
    color: #262626;
}

.vbox-body {
    flex: 1;
    display: flex;
    min-height: 0;
}

.vm-col {
    width: 510px;
    flex: none;
}

.tools-row {
    width: 478px;
    height: 117px;
    display: flex;
    align-items: center;
    gap: 19px;
    padding-left: 36px;
    background: linear-gradient(#dcdcdc, #d1d1d1);
}

.tools-icon {
    width: 58px;
    height: 64px;
}

.tools-text,
.group-name,
.vm-name {
    font-weight: 700;
    font-size: 25px;
}

.group-row {
    width: 477px;
    height: 64px;
    margin: 2px 0 0 1px;
    display: flex;
    align-items: center;
    gap: 19px;
    padding-left: 17px;
    background: linear-gradient(#f4f4f4, #e4e4e4);
    border-bottom: 1px solid #cdcdcd;
}

.chev {
    width: 28px;
    height: 18px;
}

.vm-item {
    width: 432px;
    height: 112px;
    margin-left: 16px;
    display: flex;
    align-items: center;
    gap: 16px;
    padding-left: 32px;
    background: linear-gradient(#fff, #f7f7f7);
}

.vm-item.selected {
    height: 111px;
    margin-top: 3px;
    position: relative;
    background: linear-gradient(#d8e8fe, #b9d6fb);
    border: 1px solid #6e94c4;
    border-right: none;
    padding-left: 31px;
}

.vm-icon {
    width: 64px;
    height: 64px;
    flex: none;
}

.badge-text {
    font-family: "Open Sans", sans-serif;
    font-size: 16px;
    font-weight: 700;
    fill: #3a3f4c;
    text-anchor: middle;
}

.vm-text {
    display: flex;
    flex-direction: column;
}

.vm-name {
    line-height: 32px;
    margin-bottom: 4px;
}

.vm-state {
    display: flex;
    align-items: center;
    gap: 9px;
    font-size: 25.5px;
    line-height: 34px;
}

.power {
    width: 32px;
    height: 32px;
    flex: none;
}

.details-icon {
    position: absolute;
    left: 341px;
    top: 31px;
    width: 48px;
    height: 46px;
}

.snap-col {
    flex: 1;
    display: flex;
    flex-direction: column;
    min-width: 0;
    background: #f4f4f4;
}

.toolbar {
    height: 117px;
    flex: none;
    display: flex;
    background: linear-gradient(#dcdcdc, #cfcfcf);
    border-bottom: 2px solid #a9a9a9;
}

.tool {
    position: relative;
    display: flex;
    flex-direction: column;
    align-items: center;
    padding-top: 6px;
    font-size: 22px;
    color: #111;
    flex: none;
}

.tool span {
    margin-top: 7px;
    line-height: 26px;
    letter-spacing: -0.3px;
}

.tool.off {
    color: #9a9a9a;
}

.tool.active {
    background: #bcbcbc;
    border-radius: 8px 8px 0 0;
}

.tool-icon {
    width: 64px;
    height: 66px;
}

.t-take { width: 85px; }
.t-delete { width: 108px; }
.t-restore { width: 112px; margin-right: 5px; }
.t-props { width: 131px; }
.t-clone { width: 104px; }
.t-settings { width: 128px; }
.t-discard { width: 106px; }
.t-start { width: 124px; }

.tool-sep {
    width: 12px;
    flex: none;
    margin: 3px 0 4px;
    background: repeating-linear-gradient(#777 0 2px, transparent 2px 8px) center / 2px 100% no-repeat;
}

.start-drop {
    position: absolute;
    left: 99px;
    top: 69px;
    border-left: 8px solid transparent;
    border-right: 8px solid transparent;
    border-top: 15px solid #666;
}

.snap-table {
    height: 270px;
    flex: none;
    background: #fff;
    border: 1px solid #b4b4b4;
    border-top: none;
}

.snap-head {
    height: 36px;
    display: flex;
    justify-content: space-between;
    align-items: center;
    padding: 0 0 3px 10px;
    font-size: 22px;
    letter-spacing: -0.3px;
}

.col-taken {
    width: 85px;
    height: 30px;
    line-height: 30px;
    padding-left: 10px;
    border-left: 1px solid #e2e2e2;
}

.snap-row {
    height: 36px;
}

.snap-row.alt {
    background: #ebf2fd;
}

.snap-row.last {
    height: 18px;
}

.snap-row.current {
    display: flex;
    align-items: center;
    gap: 13px;
    padding: 0 0 2px 51px;
    background: #cfcfcf;
    font-size: 26px;
    font-weight: 700;
    letter-spacing: -0.3px;
}

.props {
    flex: 1;
    display: flex;
    flex-direction: column;
    padding-top: 22px;
    min-height: 0;
}

.seg {
    position: relative;
    align-self: center;
    width: 344px;
    height: 41px;
    display: flex;
    border-radius: 9px;
    background: #e2e2e2;
}

.seg-on {
    width: 158px;
    background: #fff;
    border: 1px solid #cfcfcf;
    border-bottom: 2px solid #bdbdbd;
    border-radius: 9px;
}

.seg-off {
    flex: 1;
    text-align: center;
    font-size: 25px;
    line-height: 41px;
    letter-spacing: -0.2px;
}

.props-panel {
    flex: 1;
    margin-top: -21px;
    padding: 53px 27px 0 0;
    background: #ebebeb;
    border-radius: 12px 12px 0 0;
    border-top: 1px solid #e2e2e2;
    display: grid;
    grid-template-columns: 173px 820px;
    grid-template-rows: 40px 276px auto;
    column-gap: 22px;
    row-gap: 21px;
}

.f-label {
    text-align: right;
    font-size: 26px;
    line-height: 42px;
    letter-spacing: -0.2px;
}

.f-top {
    line-height: 30px;
}

.f-input {
    background: #fff;
    border-bottom: 2px solid #c4c4c4;
    padding-left: 3px;
    font-size: 26px;
    line-height: 40px;
    color: #888;
    letter-spacing: -0.1px;
}

.f-area {
    background: #fff;
    border: 1px solid #b4b4b4;
    border-top: 2px solid #8e8e8e;
}

.f-buttons {
    grid-column: 1 / -1;
    display: flex;
    justify-content: flex-end;
    gap: 34px;
    margin: 0 2px 0 0;
}

.mac-btn {
    height: 40px;
    border: none;
    border-radius: 8px;
    background: #f6f6f6;
    box-shadow: 0 1px 2px rgba(0, 0, 0, 0.25);
    font-family: inherit;
    font-size: 26px;
    line-height: 38px;
    color: #8a8a8a;
    padding: 0;
}

.b-reset { width: 125px; }
.b-take { width: 110px; }

.tip {
    position: absolute;
    left: 1562px;
    top: 529px;
    width: 266px;
    height: 84px;
    padding: 0 4px;
    background: #fefdc4;
    border: 1px solid #d6d5a4;
    box-shadow: 0 8px 24px rgba(0, 0, 0, 0.35);
    font-size: 23.2px;
    line-height: 26.5px;
    letter-spacing: -0.2px;
    white-space: nowrap;
}

.tip-name {
    font-weight: 700;
}

.pointer {
    position: absolute;
    left: 1554px;
    top: 490px;
    width: 24px;
    height: 36px;
}

/* menu bar */
.menubar {
    position: absolute;
    left: 0;
    top: 0;
    width: 2880px;
    height: 48px;
    display: flex;
    align-items: center;
    gap: 43px;
    padding: 0 37px 0 44px;
    background: linear-gradient(90deg, #07294d, #052144 50%, #04193a);
    font-family: Inter, sans-serif;
    font-size: 25px;
    color: #fff;
}

.apple {
    width: 27px;
    height: 32px;
    margin-bottom: 3px;
}

.menu-item.app {
    font-weight: 700;
    font-size: 26px;
}

.status {
    margin-left: auto;
    display: flex;
    align-items: center;
    gap: 38px;
}

.st {
    height: 32px;
    flex: none;
}

.shield {
    margin: 0 5px 0 6px;
}

.timem {
    margin-right: 6px;
}

.w19 { width: 19px; }
.w26 { width: 26px; }
.w27 { width: 27px; }
.w30 { width: 30px; }
.w32 { width: 32px; }
.w35 { width: 35px; }
.w37 { width: 37px; }
.w50 { width: 50px; }

.inf {
    margin-left: -35px;
    font-size: 26px;
}

.st-text {
    font-size: 23px;
}

.abc {
    display: flex;
    align-items: center;
    gap: 11px;
}

.abc-box {
    width: 31px;
    height: 38px;
    border-radius: 4px;
    background: #eef1f5;
    color: #1b2d46;
    text-align: center;
    line-height: 38px;
    font-size: 24px;
}

.clock {
    margin-left: -5px;
    white-space: nowrap;
    font-size: 26px;
    letter-spacing: 0.4px;
}

/* dock */
.dock {
    position: absolute;
    left: 385px;
    top: 1633px;
    width: 2109px;
    height: 156px;
    display: flex;
    padding: 4px 4px 0;
    background: #141c28;
    border: 1px solid #33404f;
    border-radius: 36px;
}

.dock-item {
    position: relative;
    width: 136px;
    height: 136px;
    flex: none;
}

.dock-item svg {
    width: 136px;
    height: 136px;
    display: block;
}

.dock-item.running::after {
    content: "";
    position: absolute;
    left: 65px;
    top: 140px;
    width: 6px;
    height: 8px;
    border-radius: 50%;
    background: #8a919b;
}

.dock-sep {
    width: 59px;
    flex: none;
    margin: 15px 0 13px;
    background: linear-gradient(#46505e, #46505e) center / 2px 100% no-repeat;
}

.term-text {
    font-family: "DejaVu Sans Mono", monospace;
    font-size: 26px;
    fill: #2fe52f;
}

.teams-text {
    font-family: "Liberation Sans", sans-serif;
    font-size: 46px;
    font-weight: 700;
    fill: #fff;
    text-anchor: middle;
}

.cube-text {
    font-family: "Liberation Sans", sans-serif;
    font-size: 11px;
    fill: #dfe8f5;
}
```
